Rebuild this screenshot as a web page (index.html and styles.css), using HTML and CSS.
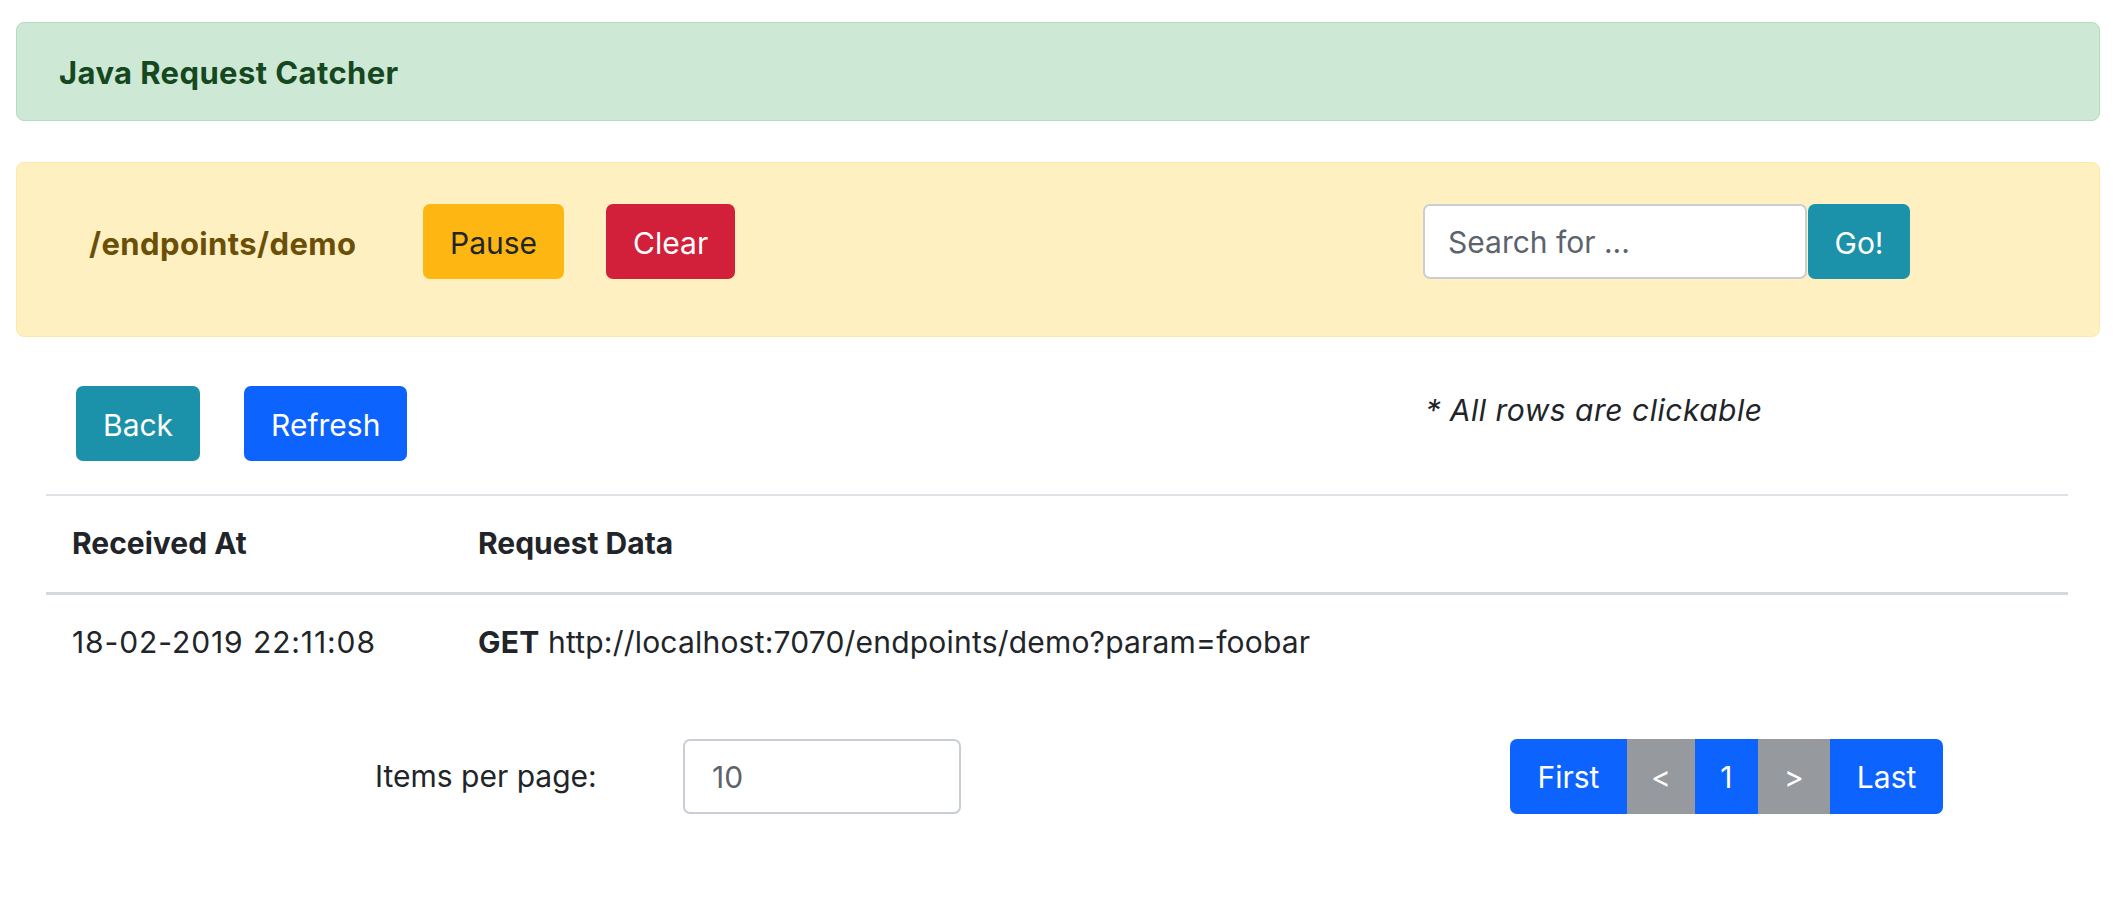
FILE: index.html
```html
<!DOCTYPE html>
<html lang="en">
<head>
<meta charset="utf-8">
<title>Java Request Catcher</title>
<link rel="stylesheet" href="styles.css">
</head>
<body>
<div class="page">
  <div class="alert alert-success">
    <h5 class="title">Java Request Catcher</h5>
  </div>

  <div class="alert alert-warning toolbar">
    <div class="endpoint">/endpoints/demo</div>
    <button class="btn btn-warning">Pause</button>
    <button class="btn btn-danger btn-clear">Clear</button>
    <form class="search">
      <input class="field search-input" type="text" placeholder="Search for ...">
      <button class="btn btn-info btn-go" type="button">Go!</button>
    </form>
  </div>

  <div class="actions">
    <button class="btn btn-info">Back</button>
    <button class="btn btn-primary btn-refresh">Refresh</button>
    <em class="hint">* All rows are clickable</em>
  </div>

  <table class="table">
    <thead>
      <tr><th class="col-time">Received At</th><th>Request Data</th></tr>
    </thead>
    <tbody>
      <tr><td class="time">18-02-2019 22:11:08</td><td><b>GET</b> http://localhost:7070/endpoints/demo?param=foobar</td></tr>
    </tbody>
  </table>

  <div class="footer">
    <label class="per-page-label">Items per page:</label>
    <input class="field per-page" type="text" value="10">
    <nav class="pagination">
      <span class="page-item active pg-first">First</span>
      <span class="page-item disabled pg-prev">&lt;</span>
      <span class="page-item active pg-num">1</span>
      <span class="page-item disabled pg-next">&gt;</span>
      <span class="page-item active pg-last">Last</span>
    </nav>
  </div>
</div>
</body>
</html>
```

FILE: styles.css
```css
* { box-sizing: border-box; }

body {
  margin: 0;
  font-family: Inter, "Noto Sans", "Liberation Sans", sans-serif;
  font-size: 30px;
  line-height: 1.5;
  color: #212529;
  background: #fff;
}

.page {
  padding: 22px 16px 0 16px;
}

.alert {
  border: 1px solid transparent;
  border-radius: 8px;
}

.alert-success {
  background: #cde9d5;
  border-color: #b4dcc1;
  height: 99px;
  display: flex;
  align-items: center;
  padding: 3px 42px 0;
}

.title {
  margin: 0;
  font-size: 31px;
  letter-spacing: 0.4px;
  font-weight: 700;
  line-height: 1.2;
  color: #15481f;
}

.alert-warning {
  background: #fff0c2;
  border-color: #fee8a4;
}

.toolbar {
  margin-top: 41px;
  height: 175px;
  display: flex;
  align-items: flex-start;
  padding: 41px 0 0 72px;
}

.endpoint {
  width: 334px;
  height: 75px;
  display: flex;
  align-items: center;
  padding-top: 6px;
  font-size: 31px;
  letter-spacing: 0.4px;
  font-weight: 700;
  color: #6b4f07;
}

.btn {
  font-family: inherit;
  font-size: 30px;
  height: 75px;
  line-height: 1;
  padding: 2px 27px 0;
  border: 0;
  border-radius: 7px;
  color: #fff;
  cursor: pointer;
}

.btn-warning { background: #fdb612; color: #212529; }
.btn-danger { background: #d21f3a; }
.btn-info { background: #1b92aa; }
.btn-primary { background: #0d63fe; }

.btn-clear { margin-left: 42px; }

.search {
  margin: 0 189px 0 auto;
  display: flex;
  gap: 1px;
}

.field {
  font-family: inherit;
  font-size: 30px;
  height: 75px;
  border: 2px solid #c9ced5;
  border-radius: 7px;
  background: #fff;
  color: #5c636a;
  padding: 0 23px;
  outline: none;
}

.search-input { width: 384px; }
.search-input::placeholder { color: #5c636a; }

.btn-go { width: 102px; padding: 2px 0 0; }

.actions {
  margin-top: 49px;
  display: flex;
  align-items: flex-start;
  padding-left: 60px;
}

.btn-refresh { margin-left: 44px; }

.hint {
  margin-left: 1018px;
  line-height: 49px;
  font-style: italic;
  letter-spacing: 0.5px;
}

.table {
  margin: 33px 32px 0 30px;
  width: calc(100% - 62px);
  border-collapse: collapse;
  border-top: 2px solid #dee2e6;
}

.table th,
.table td {
  text-align: left;
  padding: 25px 26px 26px;
  vertical-align: top;
}

.table td { letter-spacing: 0.2px; }
.table td.time { letter-spacing: 0.9px; }

.table th { font-weight: 700; }

.table thead tr { border-bottom: 3px solid #d5d9de; }

.col-time { width: 406px; }

.footer {
  margin-top: 48px;
  display: flex;
  align-items: center;
  padding-left: 359px;
}

.per-page-label { width: 308px; }

.per-page {
  width: 278px;
  padding-left: 27px;
  color: #5c636a;
}

.pagination {
  margin-left: 549px;
  display: flex;
  height: 75px;
  border-radius: 7px;
  overflow: hidden;
}

.page-item {
  display: flex;
  align-items: center;
  color: #fff;
  line-height: 1;
}

.pg-first { padding: 0 27.5px; }
.pg-prev { padding: 0 24px; }
.pg-num { padding: 0 25.5px; }
.pg-next { padding: 0 26px; }
.pg-last { padding: 0 27px; }

.page-item.active { background: #0d63fe; }
.page-item.disabled { background: #969a9f; }
```
